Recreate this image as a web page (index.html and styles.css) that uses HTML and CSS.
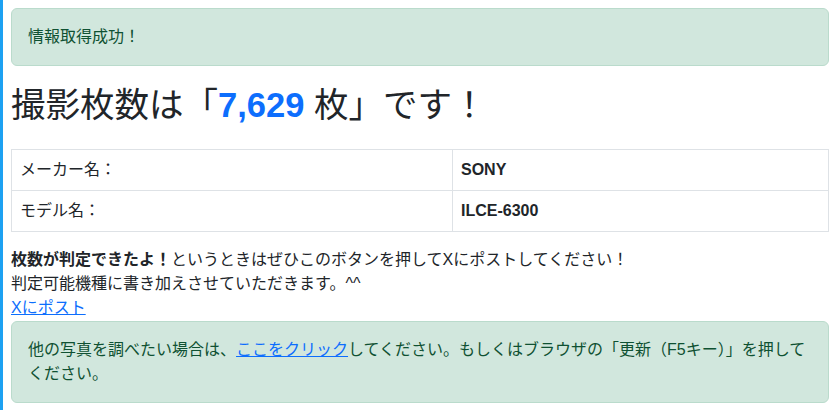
FILE: index.html
```html
<!DOCTYPE html>
<html lang="ja">
<head>
    <meta charset="UTF-8">
    <meta name="viewport" content="width=device-width, initial-scale=1.0">
    <title>撮影枚数チェッカー - 結果</title>
    <link rel="stylesheet" href="styles.css">
</head>
<body>
    <div class="page">
        <div class="alert">情報取得成功！</div>

        <h1 class="result-title">撮影枚数は「<span class="count">7,629</span> 枚」です！</h1>

        <table class="info-table">
            <tr>
                <td class="label">メーカー名：</td>
                <td class="value">SONY</td>
            </tr>
            <tr>
                <td class="label">モデル名：</td>
                <td class="value">ILCE-6300</td>
            </tr>
        </table>

        <div class="share">
            <strong>枚数が判定できたよ！</strong>というときはぜひこのボタンを押してXにポストしてください！<br>
            判定可能機種に書き加えさせていただきます。^^<br>
            <a href="#">Xにポスト</a>
        </div>

        <div class="alert">
            他の写真を調べたい場合は、<a href="#">ここをクリック</a>してください。もしくはブラウザの「更新（F5キー）」を押してください。
        </div>
    </div>
</body>
</html>
```

FILE: styles.css
```css
* { margin: 0; padding: 0; box-sizing: border-box; }

body {
    font-family: "Liberation Sans", "Noto Sans CJK JP", sans-serif;
    font-size: 16px;
    line-height: 1.5;
    color: #212529;
    background: #fff;
}

.page {
    border-left: 3px solid #1da1f2;
    min-height: 100vh;
    padding: 8px 7px 8px 8px;
}

a {
    color: #0d6efd;
    text-decoration: underline;
}

.alert {
    background: #d1e7dd;
    border: 1px solid #badbcc;
    color: #0f5132;
    border-radius: 6px;
    padding: 16px;
}

.alert a {
    color: #0d6efd;
}

.result-title {
    font-size: 34.5px;
    font-weight: 400;
    line-height: 1.2;
    margin: 19px 0 0;
}

.count {
    color: #0d6efd;
    font-weight: 700;
}

.info-table {
    width: 100%;
    border-collapse: collapse;
    margin: 23px 0 16px;
}

.info-table td {
    border: 1px solid #dee2e6;
    padding: 8px;
}

.info-table .label {
    width: 441px;
}

.info-table .value {
    font-weight: 700;
}

.share {
    margin-bottom: 1px;
}
```
